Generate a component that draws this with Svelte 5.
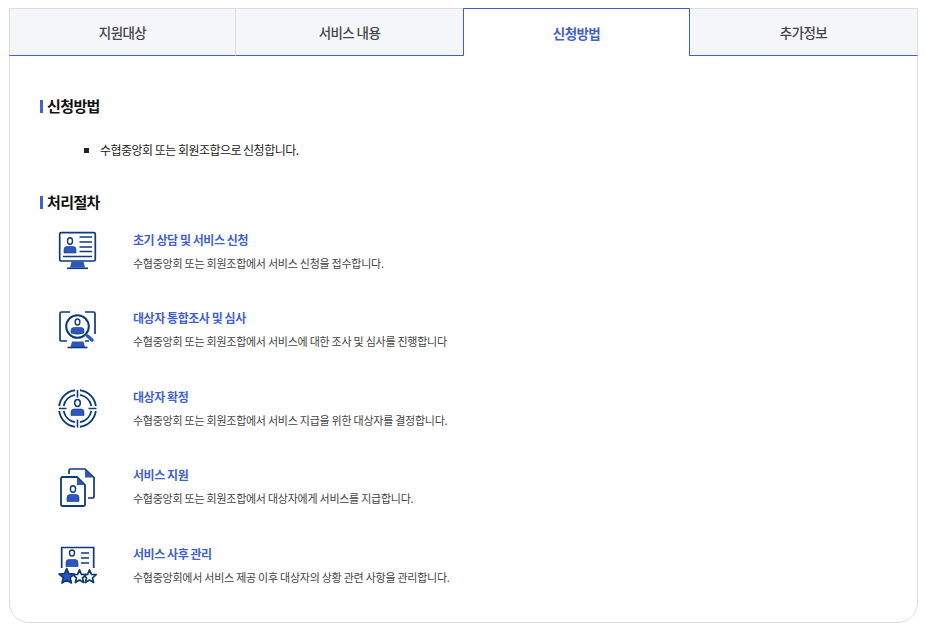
<script>
  const tabs = ['지원대상', '서비스 내용', '신청방법', '추가정보'];
  const active = 2;
  const steps = [
    { icon: 'monitor', title: '초기 상담 및 서비스 신청', text: '수협중앙회 또는 회원조합에서 서비스 신청을 접수합니다.' },
    { icon: 'search', title: '대상자 통합조사 및 심사', text: '수협중앙회 또는 회원조합에서 서비스에 대한 조사 및 심사를 진행합니다' },
    { icon: 'target', title: '대상자 확정', text: '수협중앙회 또는 회원조합에서 서비스 지급을 위한 대상자를 결정합니다.' },
    { icon: 'docs', title: '서비스 지원', text: '수협중앙회 또는 회원조합에서 대상자에게 서비스를 지급합니다.' },
    { icon: 'stars', title: '서비스 사후 관리', text: '수협중앙회에서 서비스 제공 이후 대상자의 상황 관련 사항을 관리합니다.' }
  ];

  // five-pointed star outline around a centre
  function star(cx, cy, r) {
    const pts = [];
    for (let i = 0; i < 10; i++) {
      const rad = i % 2 ? r * 0.45 : r;
      const a = -Math.PI / 2 + (i * Math.PI) / 5;
      pts.push((cx + rad * Math.cos(a)).toFixed(1) + ',' + (cy + rad * Math.sin(a)).toFixed(1));
    }
    return pts.join(' ');
  }
</script>

<div class="box">
  <ul class="tabs">
    {#each tabs as tab, i}
      <li class:on={i === active}>{tab}</li>
    {/each}
  </ul>

  <div class="body">
    <h3>신청방법</h3>
    <ul class="bullets">
      <li>수협중앙회 또는 회원조합으로 신청합니다.</li>
    </ul>

    <h3 class="second">처리절차</h3>
    <div class="steps">
      {#each steps as step}
        <div class="step">
          <svg class="icon" viewBox="0 0 40 40" fill="none" stroke="#0f3a78" stroke-width="1.7">
            {#if step.icon === 'monitor'}
              <rect x="1.700" y="1.700" width="35.600" height="28.300" rx="1.500" />
              <path d="M5 25.500h29M21.500 6h12.500M21.500 11h12.500M21.500 16h12.500M21.500 20.500h12.500" stroke-width="1.400" />
              <ellipse cx="12" cy="10" rx="2.500" ry="3.200" stroke-width="1.400" />
              <path d="M6 22v-3.500q0-3 3-3h6q3 0 3 3V22z" fill="#2f56c0" stroke="#0f3a78" stroke-width="0.600" />
              <path d="M13.500 30.500h12l1.500 6h-15z" fill="#2f56c0" stroke="none" />
              <path d="M9 37.300h21" stroke-width="1.600" />
            {:else if step.icon === 'search'}
              <path d="M9 31H3.500a1.500 1.500 0 0 1-1.500-1.500V3.500A1.500 1.500 0 0 1 3.500 2H12M27 2h8.500A1.500 1.500 0 0 1 37 3.500V24M27 31h4" />
              <circle cx="19.500" cy="16.500" r="11.300" stroke-width="2" />
              <ellipse cx="19.500" cy="12" rx="2.400" ry="3" stroke-width="1.400" />
              <path d="M13 23v-2.500q0-3 3-3h7q3 0 3 3V23q-6.500 2.500-13 0z" fill="#2f56c0" stroke="#0f3a78" stroke-width="0.600" />
              <path d="M29.500 26l4.500 4" stroke="#2f56c0" stroke-width="3.400" stroke-linecap="round" />
              <path d="M14 31.500h11.500l1.500 5.500h-14.500z" fill="#2f56c0" stroke="none" />
              <path d="M9.500 37.500h20" stroke-width="1.600" />
            {:else if step.icon === 'target'}
              <path d="M17 2.200A18.300 18.300 0 0 0 1.200 18M22 2.200A18.300 18.300 0 0 1 37.800 18M1.200 23A18.300 18.300 0 0 0 17 38.800M22 38.800A18.300 18.300 0 0 0 37.800 23" stroke-width="1.900" />
              <path d="M17 6.800A14 14 0 0 0 5.700 18M22 6.800A14 14 0 0 1 33.300 18M5.700 23A14 14 0 0 0 17 34.200M22 34.200A14 14 0 0 0 33.300 23" stroke-width="1.800" />
              <path d="M19.500 2v7.500M19.500 31.500v8M1 20.500h7.500M30.500 20.500h8" stroke-width="1.600" />
              <ellipse cx="19.500" cy="15" rx="2.800" ry="3.400" stroke-width="1.500" />
              <path d="M13 27.500V24q0-3 3-3h7q3 0 3 3v3.500z" fill="#2f56c0" stroke="#0f3a78" stroke-width="0.600" />
            {:else if step.icon === 'docs'}
              <path d="M11 7V3.500A1.500 1.500 0 0 1 12.500 2H27l9 8.500V29.500a1.500 1.500 0 0 1-1.500 1.500H30" />
              <path d="M27 2.500l8.500 8H27z" fill="#2f56c0" stroke="none" />
              <path d="M4.500 10H19l8 8v19.500a1.500 1.500 0 0 1-1.500 1.500h-21A1.500 1.500 0 0 1 3 37.500v-26A1.500 1.500 0 0 1 4.500 10z" fill="#fff" stroke-width="1.800" />
              <path d="M19 10.500l7.500 7.500H19z" fill="#2f56c0" stroke="none" />
              <ellipse cx="15" cy="22" rx="2.600" ry="3.200" stroke-width="1.400" />
              <path d="M9 34.500v-4q0-3 3-3h6q3 0 3 3v4z" fill="#2f56c0" stroke="#0f3a78" stroke-width="0.600" />
            {:else}
              <path d="M3.700 23V2.500h32V23" />
              <ellipse cx="14" cy="8" rx="2.500" ry="3" stroke-width="1.400" />
              <path d="M8 21.500v-4q0-3 3-3h6q3 0 3 3v4z" fill="#2f56c0" stroke="#0f3a78" stroke-width="0.600" />
              <path d="M23 8h8M23 13h8M23 18h8" stroke-width="1.500" />
              <polygon points={star(31.500, 31.800, 7)} fill="#fff" stroke-linejoin="round" />
              <polygon points={star(21.500, 31.800, 7)} fill="#fff" stroke-linejoin="round" />
              <polygon points={star(8.700, 31.500, 8)} fill="#2f56c0" stroke-linejoin="round" />
            {/if}
          </svg>
          <div class="copy">
            <strong>{step.title}</strong>
            <p>{step.text}</p>
          </div>
        </div>
      {/each}
    </div>
  </div>
</div>

<style>
  :global(body) {
    background: #fff;
  }

  .box {
    box-sizing: border-box;
    height: 615px;
    margin: 8px 7px 0 9px;
    border: 1px solid #dcdde0;
    border-radius: 0 0 20px 20px;
    font-family: "Noto Sans CJK KR", "Noto Sans", sans-serif;
    color: #222;
  }

  ul {
    margin: 0;
    padding: 0;
    list-style: none;
  }

  .tabs {
    display: grid;
    grid-template-columns: 226px 228px 227px 1fr;
    height: 48px;
    margin: -1px -1px 0;
  }

  .tabs li {
    display: flex;
    align-items: center;
    justify-content: center;
    box-sizing: border-box;
    background: #f5f6fa;
    border-top: 1px solid #dcdde0;
    border-left: 1px solid #dcdde0;
    border-bottom: 1px solid #3f62cc;
    font-size: 13.500px;
    font-weight: 500;
    letter-spacing: -0.600px;
    color: #444;
  }

  .tabs li:last-child {
    border-right: 1px solid #dcdde0;
    border-left: 0;
  }

  .tabs li.on {
    background: #fff;
    border: 1px solid #3f62cc;
    border-bottom: 0;
    color: #3f62cc;
    font-weight: 700;
  }

  .body {
    padding: 38px 30px 0;
  }

  h3 {
    display: flex;
    align-items: center;
    gap: 4px;
    margin: 0;
    font-size: 15px;
    line-height: 24px;
    font-weight: 700;
    letter-spacing: -0.600px;
    color: #111;
  }

  h3::before {
    content: "";
    width: 3px;
    height: 13px;
    background: #3f62cc;
  }

  h3.second {
    margin-top: 31px;
  }

  .bullets {
    padding: 23px 0 0 44px;
  }

  .bullets li {
    display: flex;
    align-items: center;
    gap: 11px;
    font-size: 12px;
    line-height: 18px;
    letter-spacing: -0.530px;
    color: #222;
  }

  .bullets li::before {
    content: "";
    width: 5px;
    height: 5px;
    background: #222;
  }

  .steps {
    display: flex;
    flex-direction: column;
    gap: 38.600px;
    margin-top: 17px;
    padding-left: 18px;
  }

  .step {
    display: flex;
    align-items: center;
    gap: 35px;
    height: 40px;
  }

  .icon {
    flex: none;
    width: 40px;
    height: 40px;
  }

  .copy strong {
    display: block;
    font-size: 12px;
    line-height: 18px;
    font-weight: 700;
    letter-spacing: -0.450px;
    color: #3f62cc;
  }

  .copy p {
    margin: 5px 0 0;
    font-size: 11px;
    line-height: 18px;
    letter-spacing: -0.250px;
    color: #444;
  }
</style>
